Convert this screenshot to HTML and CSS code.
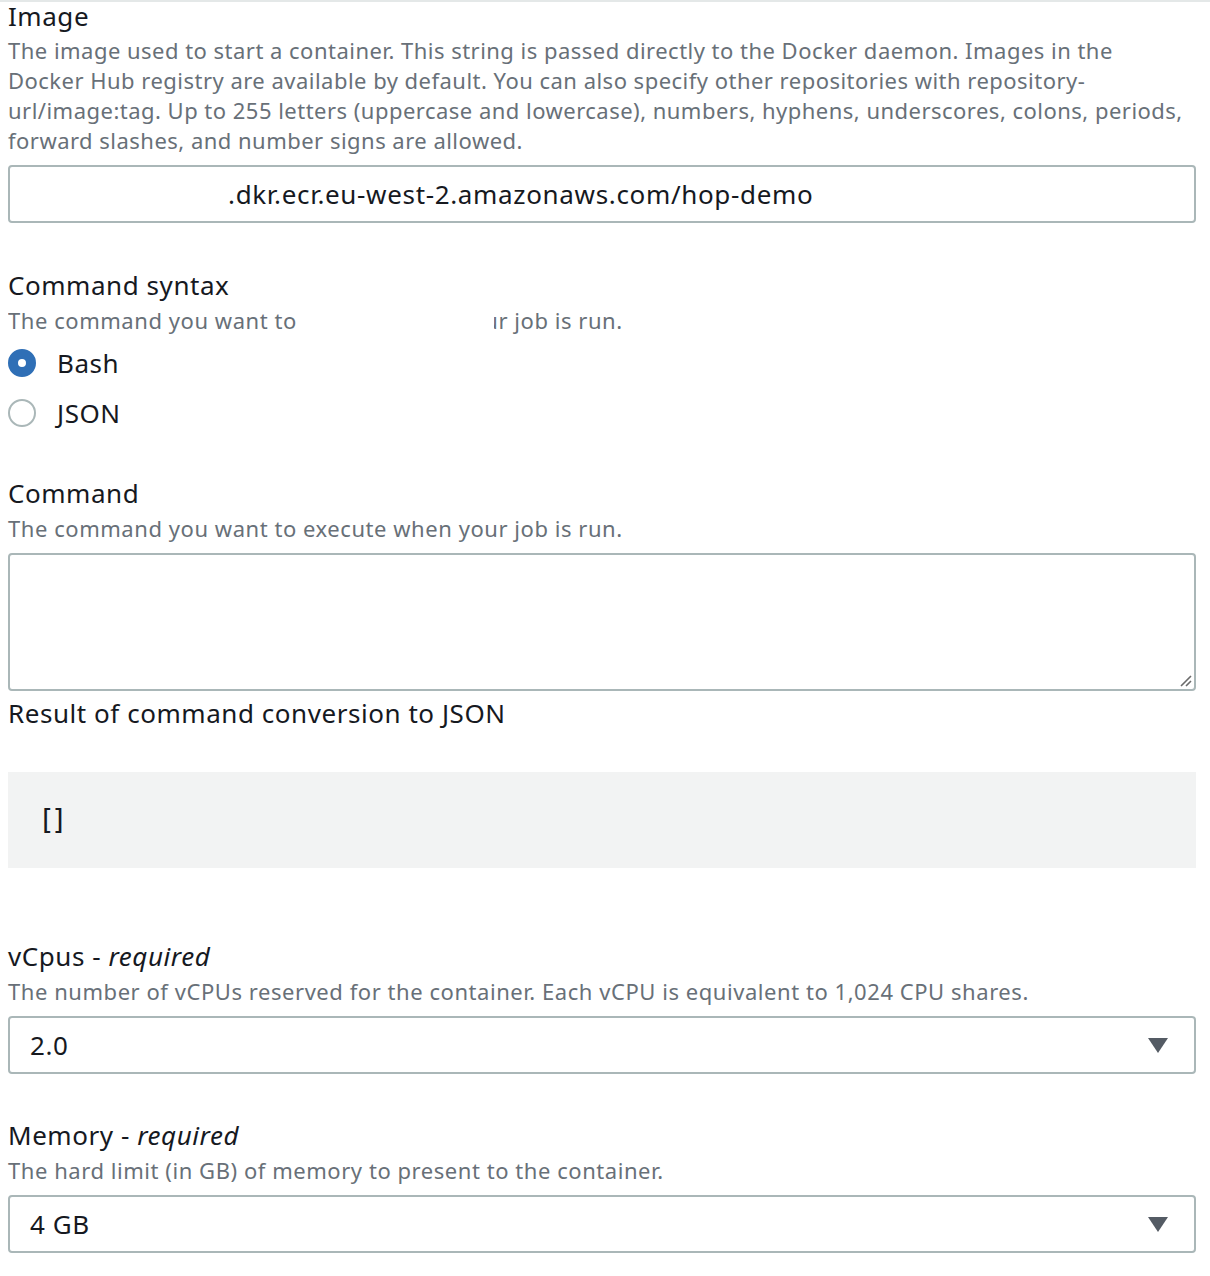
FILE: index.html
```html
<!DOCTYPE html>
<html>
<head>
<meta charset="utf-8">
<link rel="stylesheet" href="styles.css">
</head>
<body>
<div class="topline"></div>
<div class="form">
  <div class="field f-image">
    <div class="label">Image</div>
    <div class="desc">The image used to start a container. This string is passed directly to the Docker daemon. Images in the<br>Docker Hub registry are available by default. You can also specify other repositories with repository-<br>url/image:tag. Up to 255 letters (uppercase and lowercase), numbers, hyphens, underscores, colons, periods,<br>forward slashes, and number signs are allowed.</div>
    <div class="input"><span class="redact-gap"></span>.dkr.ecr.eu-west-2.amazonaws.com/hop-demo</div>
  </div>

  <div class="field f-syntax">
    <div class="label">Command syntax</div>
    <div class="desc redacted">The command you want to execute when your job is run.<span class="mask"></span></div>
    <div class="radios">
      <label class="radio"><span class="dot on"></span><span class="rtext">Bash</span></label>
      <label class="radio"><span class="dot"></span><span class="rtext">JSON</span></label>
    </div>
  </div>

  <div class="field f-command">
    <div class="label">Command</div>
    <div class="desc">The command you want to execute when your job is run.</div>
    <div class="textarea"><svg class="grip" width="14" height="14" viewBox="0 0 14 14"><path d="M13 3 L3 13 M13 8 L8 13" stroke="#6b6b6b" stroke-width="1.6" fill="none"/></svg></div>
  </div>

  <div class="field f-result">
    <div class="label">Result of command conversion to JSON</div>
    <div class="codebox"><span class="code">[]</span></div>
  </div>

  <div class="field f-vcpu">
    <div class="label">vCpus - <i>required</i></div>
    <div class="desc">The number of vCPUs reserved for the container. Each vCPU is equivalent to 1,024 CPU shares.</div>
    <div class="select"><span>2.0</span><span class="caret"></span></div>
  </div>

  <div class="field f-mem">
    <div class="label">Memory - <i>required</i></div>
    <div class="desc">The hard limit (in GB) of memory to present to the container.</div>
    <div class="select"><span>4 GB</span><span class="caret"></span></div>
  </div>
</div>
</body>
</html>
```
FILE: styles.css
```css
html, body {
  margin: 0;
  padding: 0;
  background: #ffffff;
}
body {
  font-family: "Noto Sans", "Open Sans", sans-serif;
  color: #16191f;
}
.topline {
  height: 2px;
  background: #e4e8e8;
}
.form {
  padding: 0 14px 0 8px;
}
.field {
  display: flex;
  flex-direction: column;
}
.label {
  font-size: 26px;
  line-height: 30px;
  letter-spacing: 0.55px;
  color: #16191f;
}
.desc {
  font-size: 22px;
  line-height: 30px;
  letter-spacing: 0.55px;
  color: #687078;
  margin-top: 5px;
  white-space: nowrap;
}
.f-image .label { line-height: 28px; }
.f-image .desc { margin-top: 5px; letter-spacing: 0.48px; }
.input {
  margin-top: 10px;
  height: 54px;
  border: 2px solid #aab7b8;
  border-radius: 4px;
  display: flex;
  align-items: center;
  font-size: 26px;
  letter-spacing: 0.66px;
  color: #16191f;
  white-space: nowrap;
}
.redact-gap {
  display: inline-block;
  width: 218px;
}
.f-syntax { margin-top: 47px; }
.redacted {
  position: relative;
  height: 30px;
  overflow: hidden;
}
.mask {
  position: absolute;
  left: 289px;
  top: 0;
  width: 197px;
  height: 30px;
  background: #ffffff;
}
.radios {
  display: flex;
  flex-direction: column;
  margin-top: 3px;
}
.radio {
  display: flex;
  align-items: center;
  height: 50px;
}
.dot {
  width: 24px;
  height: 24px;
  border: 2px solid #aab7b8;
  border-radius: 50%;
  box-sizing: content-box;
  flex: none;
}
.dot.on {
  width: 8px;
  height: 8px;
  border: 10px solid #2f6fb6;
  background: #ffffff;
}
.rtext {
  font-size: 26px;
  letter-spacing: 0.55px;
  margin-left: 21px;
  color: #16191f;
}
.f-command { margin-top: 40px; }
.textarea {
  margin-top: 10px;
  height: 134px;
  border: 2px solid #aab7b8;
  border-radius: 4px;
  position: relative;
}
.grip {
  position: absolute;
  right: 2px;
  bottom: 2px;
}
.f-result { margin-top: 7px; }
.codebox {
  margin-top: 44px;
  height: 96px;
  background: #f2f3f3;
  display: flex;
  align-items: center;
  padding-left: 30px;
}
.code {
  font-family: "DejaVu Sans Mono", "Liberation Mono", monospace;
  font-size: 28px;
  letter-spacing: -4px;
  color: #16191f;
}
.f-vcpu { margin-top: 73px; }
.f-mem { margin-top: 46px; }
.select {
  margin-top: 10px;
  height: 54px;
  border: 2px solid #aab7b8;
  border-radius: 4px;
  display: flex;
  align-items: center;
  justify-content: space-between;
  padding: 0 26px 0 20px;
  font-size: 26px;
  letter-spacing: 0.6px;
  color: #16191f;
}
.caret {
  width: 0;
  height: 0;
  border-left: 10px solid transparent;
  border-right: 10px solid transparent;
  border-top: 15px solid #545b64;
}
```
